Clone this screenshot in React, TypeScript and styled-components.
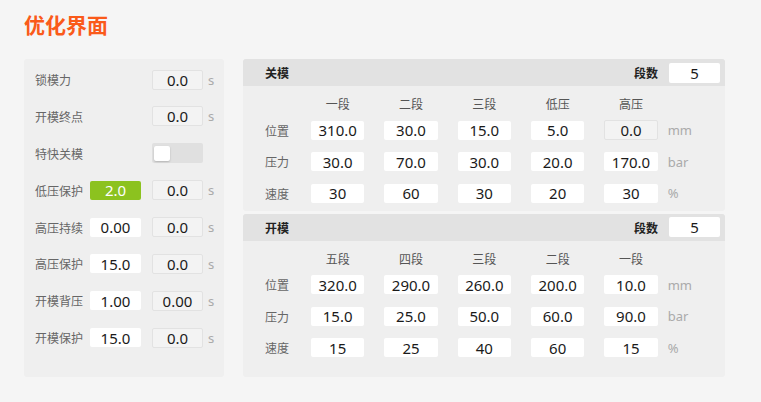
import React from "react";
import styled, { createGlobalStyle } from "styled-components";

const Global = createGlobalStyle`
  html, body { margin: 0; padding: 0; background: #f5f5f5; }
  body { font-family: "Noto Sans", "Noto Sans CJK SC", sans-serif; }
  * { box-sizing: border-box; }
`;

const Page = styled.div`
  width: 761px;
  height: 402px;
  padding: 9px 24px 0 24px;
  background: #f5f5f5;
`;

const Title = styled.h1`
  margin: 0;
  font-size: 21px;
  line-height: 30px;
  font-weight: 700;
  color: #fa5a1a;
  font-family: "Noto Sans CJK SC", sans-serif;
`;

const Main = styled.div`
  display: flex;
  gap: 19px;
  margin-top: 20px;
  height: 318px;
`;

const LeftPanel = styled.div`
  width: 200px;
  background: #efefef;
  border-radius: 3px;
  padding: 11px 0 0 11px;
  display: flex;
  flex-direction: column;
  gap: 17.9px;
`;

const LRow = styled.div`
  display: flex;
  align-items: center;
  height: 19px;
`;

const Label = styled.span<{ $w?: number }>`
  width: ${(p) => p.$w ?? 55}px;
  flex: none;
  font-size: 12px;
  color: #666;
  font-family: "Noto Sans CJK SC", sans-serif;
  white-space: nowrap;
`;

type Kind = "white" | "gray" | "green";

const Box = styled.div<{ $kind: Kind; $w?: number; $ml?: number }>`
  width: ${(p) => p.$w ?? 51}px;
  height: ${(p) => (p.$kind === "gray" ? 20 : 19)}px;
  margin-left: ${(p) => p.$ml ?? 0}px;
  flex: none;
  display: flex;
  align-items: center;
  justify-content: center;
  font-size: 15px;
  border-radius: 2px;
  color: ${(p) => (p.$kind === "green" ? "#fff" : "#1a1a1a")};
  background: ${(p) =>
    p.$kind === "green" ? "#8cc21f" : p.$kind === "gray" ? "#f3f3f3" : "#ffffff"};
  border: ${(p) => (p.$kind === "gray" ? "1px solid #e2e2e2" : "none")};
`;

const Spacer = styled.div`
  width: 51px;
  flex: none;
`;

const Unit = styled.span<{ $ml?: number }>`
  margin-left: ${(p) => p.$ml ?? 5}px;
  font-size: 13px;
  color: #aaa;
`;

const Toggle = styled.div`
  width: 51px;
  height: 20px;
  margin-left: 11px;
  background: #e0e0e0;
  border-radius: 2px;
  position: relative;
`;

const Knob = styled.div`
  position: absolute;
  left: 2px;
  top: 3px;
  width: 16px;
  height: 15px;
  background: #fff;
  border-radius: 2px;
  box-shadow: 0 1px 2px rgba(0, 0, 0, 0.2);
`;

const RightPanel = styled.div`
  width: 482px;
  display: flex;
  flex-direction: column;
  gap: 3px;
`;

const Section = styled.div<{ $grow?: boolean }>`
  background: #efefef;
  border-radius: 3px;
  ${(p) => (p.$grow ? "flex: 1;" : "")}
`;

const SectionHeader = styled.div`
  height: 27px;
  background: #e2e2e2;
  border-radius: 3px 3px 0 0;
  display: flex;
  align-items: center;
  padding: 0 5px 0 22px;
`;

const HeaderTitle = styled.span`
  font-size: 12px;
  font-weight: 700;
  color: #222;
  font-family: "Noto Sans CJK SC", sans-serif;
  flex: 1;
`;

const HeaderLabel = styled.span`
  font-size: 12px;
  font-weight: 700;
  color: #222;
  font-family: "Noto Sans CJK SC", sans-serif;
  margin-right: 11px;
`;

const CountBox = styled(Box)`
  height: 20px;
`;

const Grid = styled.div`
  display: grid;
  grid-template-columns: 26px repeat(5, 53.33px) auto;
  grid-template-rows: 14px repeat(3, 19px);
  column-gap: 20px;
  row-gap: 12.5px;
  padding: 8px 0 8px 22px;
  align-items: center;
`;

const ColHead = styled.div`
  grid-row: 1;
  align-self: start;
  height: 17px;
  margin-top: 1px;
  font-size: 12px;
  line-height: 17px;
  color: #555;
  text-align: center;
  font-family: "Noto Sans CJK SC", sans-serif;
`;

const Blank = styled.div`
  grid-row: 1;
`;

const RowLabel = styled.span`
  font-size: 12px;
  color: #666;
  white-space: nowrap;
  font-family: "Noto Sans CJK SC", sans-serif;
`;

const GUnit = styled.span`
  font-size: 13px;
  color: #aaa;
  margin-left: -10px;
`;

type Cell = { v: string; gray?: boolean };

const leftRows: {
  label: string;
  first?: { v: string; kind: Kind };
  second?: string;
  toggle?: boolean;
}[] = [
  { label: "锁模力", second: "0.0" },
  { label: "开模终点", second: "0.0" },
  { label: "特快关模", toggle: true },
  { label: "低压保护", first: { v: "2.0", kind: "green" }, second: "0.0" },
  { label: "高压持续", first: { v: "0.00", kind: "white" }, second: "0.0" },
  { label: "高压保护", first: { v: "15.0", kind: "white" }, second: "0.0" },
  { label: "开模背压", first: { v: "1.00", kind: "white" }, second: "0.00" },
  { label: "开模保护", first: { v: "15.0", kind: "white" }, second: "0.0" },
];

const SectionTable: React.FC<{
  title: string;
  heads: string[];
  rows: { label: string; cells: Cell[]; unit: string }[];
  grow?: boolean;
}> = ({ title, heads, rows, grow }) => (
  <Section $grow={grow}>
    <SectionHeader>
      <HeaderTitle>{title}</HeaderTitle>
      <HeaderLabel>段数</HeaderLabel>
      <CountBox $kind="white">5</CountBox>
    </SectionHeader>
    <Grid>
      <Blank />
      {heads.map((h) => (
        <ColHead key={h}>{h}</ColHead>
      ))}
      <Blank />
      {rows.map((r) => (
        <React.Fragment key={r.label}>
          <RowLabel>{r.label}</RowLabel>
          {r.cells.map((c, i) => (
            <Box key={i} $kind={c.gray ? "gray" : "white"} $w={53.33}>
              {c.v}
            </Box>
          ))}
          <GUnit>{r.unit}</GUnit>
        </React.Fragment>
      ))}
    </Grid>
  </Section>
);

export default function App() {
  return (
    <Page>
      <Global />
      <Title>优化界面</Title>
      <Main>
        <LeftPanel>
          {leftRows.map((r) => (
            <LRow key={r.label}>
              <Label>{r.label}</Label>
              {r.first ? (
                <Box $kind={r.first.kind}>{r.first.v}</Box>
              ) : (
                <Spacer />
              )}
              {r.toggle ? (
                <Toggle>
                  <Knob />
                </Toggle>
              ) : (
                <>
                  <Box $kind="gray" $ml={11}>
                    {r.second}
                  </Box>
                  <Unit>s</Unit>
                </>
              )}
            </LRow>
          ))}
        </LeftPanel>
        <RightPanel>
          <SectionTable
            title="关模"
            heads={["一段", "二段", "三段", "低压", "高压"]}
            rows={[
              {
                label: "位置",
                cells: [
                  { v: "310.0" },
                  { v: "30.0" },
                  { v: "15.0" },
                  { v: "5.0" },
                  { v: "0.0", gray: true },
                ],
                unit: "mm",
              },
              {
                label: "压力",
                cells: [
                  { v: "30.0" },
                  { v: "70.0" },
                  { v: "30.0" },
                  { v: "20.0" },
                  { v: "170.0" },
                ],
                unit: "bar",
              },
              {
                label: "速度",
                cells: [{ v: "30" }, { v: "60" }, { v: "30" }, { v: "20" }, { v: "30" }],
                unit: "%",
              },
            ]}
          />
          <SectionTable
            grow
            title="开模"
            heads={["五段", "四段", "三段", "二段", "一段"]}
            rows={[
              {
                label: "位置",
                cells: [
                  { v: "320.0" },
                  { v: "290.0" },
                  { v: "260.0" },
                  { v: "200.0" },
                  { v: "10.0" },
                ],
                unit: "mm",
              },
              {
                label: "压力",
                cells: [
                  { v: "15.0" },
                  { v: "25.0" },
                  { v: "50.0" },
                  { v: "60.0" },
                  { v: "90.0" },
                ],
                unit: "bar",
              },
              {
                label: "速度",
                cells: [{ v: "15" }, { v: "25" }, { v: "40" }, { v: "60" }, { v: "15" }],
                unit: "%",
              },
            ]}
          />
        </RightPanel>
      </Main>
    </Page>
  );
}
